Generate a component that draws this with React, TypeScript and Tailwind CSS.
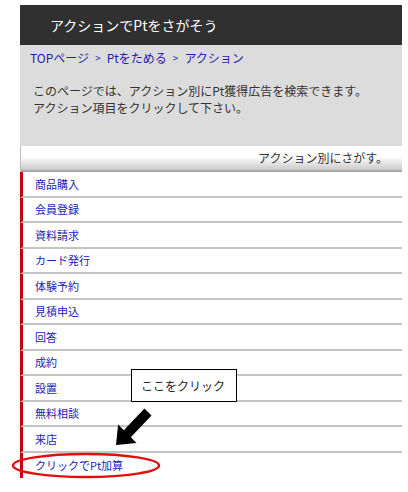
import React from "react";

const items = [
  "商品購入",
  "会員登録",
  "資料請求",
  "カード発行",
  "体験予約",
  "見積申込",
  "回答",
  "成約",
  "設置",
  "無料相談",
  "来店",
];

export default function App() {
  return (
    <div
      className="relative w-[408px] h-[492px] bg-white overflow-hidden"
      style={{ fontFamily: '"Noto Sans CJK JP", "Noto Sans", sans-serif' }}
    >
      <div className="ml-[20px] mr-[6px] pt-[5px]">
        <div className="h-[40px] bg-[#303030] flex items-center pl-[30px] text-white text-[14px]">
          アクションでPtをさがそう
        </div>
        <div className="bg-[#dcdcdc] h-[101px] pl-[10px] pt-[4px]">
          <div className="text-[12px] text-[#1e1eb0] leading-[18px] flex items-center">
            <span>TOPページ</span>
            <span className="mx-[6px] text-[10px]">&gt;</span>
            <span>Ptをためる</span>
            <span className="mx-[6px] text-[10px]">&gt;</span>
            <span>アクション</span>
          </div>
          <div className="mt-[15px] pl-[3px] text-[12px] text-[#333] leading-[17px]">
            <div>このページでは、アクション別にPt獲得広告を検索できます。</div>
            <div>アクション項目をクリックして下さい。</div>
          </div>
        </div>
        <div className="h-[26px] border-l border-[#bdbdbd] border-b-2 border-b-[#a8a8a8] bg-[linear-gradient(to_bottom,#ffffff_0%,#ffffff_45%,#c9c9c9_100%)] flex items-center justify-end pr-[14px] text-[12px] text-[#333]">
          アクション別にさがす。
        </div>
        <div>
          {items.map((t) => (
            <div
              key={t}
              className="h-[25.5px] border-l-[3px] border-l-[#c40010] border-b-2 border-b-[#c4c4c4] flex items-center pl-[12px] text-[11px] text-[#2222b8]"
            >
              {t}
            </div>
          ))}
          <div className="h-[25px] border-l-[3px] border-l-[#c40010] flex items-center pl-[12px] text-[11px] text-[#2222b8]">
            クリックでPt加算
          </div>
        </div>
      </div>

      <div className="absolute left-[131px] top-[369px] w-[106px] h-[33px] border border-black bg-white flex items-center pl-[9px] text-[12px] text-[#222]">
        ここをクリック
      </div>

      <svg
        className="absolute left-0 top-0 pointer-events-none"
        width="408"
        height="492"
        viewBox="0 0 408 492"
      >
        <polygon
          points="144.5,408.5 151.5,415.5 130.8,437.2 136.5,442.9 116,445 118.1,424.5 123.8,430.2"
          fill="#000"
        />
        <ellipse
          cx="86"
          cy="465.5"
          rx="73"
          ry="11.5"
          fill="none"
          stroke="#e01010"
          strokeWidth="2.5"
        />
      </svg>
    </div>
  );
}
